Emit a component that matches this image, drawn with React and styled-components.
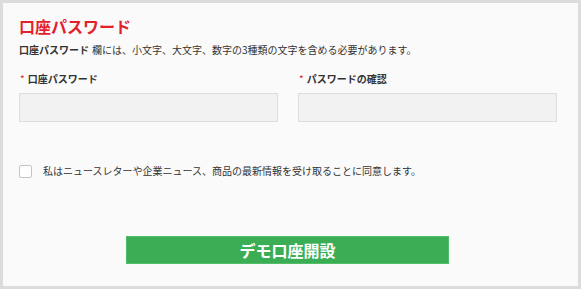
import React from "react";
import styled, { createGlobalStyle } from "styled-components";

const GlobalStyle = createGlobalStyle`
  * {
    box-sizing: border-box;
  }
  body {
    margin: 0;
    background: #dcdcdc;
    font-family: "Noto Sans CJK JP", "Noto Sans", sans-serif;
    color: #333;
  }
`;

const Frame = styled.div`
  width: 581px;
  height: 289px;
  padding: 3px;
  background: #dcdcdc;
`;

const Card = styled.div`
  height: 100%;
  background: #fafafa;
  padding: 12px 16px 0;
  display: flex;
  flex-direction: column;
`;

const Title = styled.h1`
  margin: 0;
  font-size: 16px;
  line-height: 22px;
  font-weight: 700;
  color: #e3202c;
`;

const Note = styled.p`
  margin: 6px 0 0;
  font-size: 10px;
  line-height: 14px;
  strong {
    font-weight: 700;
    margin-right: 3px;
  }
`;

const Fields = styled.div`
  display: grid;
  grid-template-columns: 259px 259px;
  column-gap: 20px;
  margin-top: 15px;
`;

const Field = styled.div`
  display: flex;
  flex-direction: column;
`;

const Label = styled.label`
  font-size: 10px;
  line-height: 14px;
  font-weight: 700;
  padding-left: 1px;
  span {
    color: #e3202c;
    margin-right: 3px;
    font-weight: 400;
  }
`;

const Input = styled.input`
  margin-top: 7px;
  height: 29px;
  background: #f2f2f2;
  border: 1px solid #dddddd;
  border-radius: 0;
  outline: none;
  padding: 0 8px;
`;

const Agree = styled.label`
  display: flex;
  align-items: center;
  gap: 11px;
  margin-top: 42px;
  font-size: 10px;
  line-height: 14px;
`;

const Box = styled.span`
  width: 13px;
  height: 13px;
  border: 1px solid #c4c4c4;
  border-radius: 2px;
  background: #fff;
  flex-shrink: 0;
`;

const Submit = styled.button`
  margin: 58px 0 0 107px;
  width: 323px;
  height: 28px;
  border: 1px solid #52bd69;
  background: #3bad54;
  color: #fff;
  font-family: "Noto Sans CJK JP", "Noto Sans", sans-serif;
  font-size: 16px;
  font-weight: 700;
  padding: 0;
  cursor: pointer;
`;

const App = () => {
  return (
    <>
      <GlobalStyle />
      <Frame>
        <Card>
          <Title>口座パスワード</Title>
          <Note>
            <strong>口座パスワード</strong>欄には、小文字、大文字、数字の3種類の文字を含める必要があります。
          </Note>
          <Fields>
            <Field>
              <Label>
                <span>*</span>口座パスワード
              </Label>
              <Input type="password" />
            </Field>
            <Field>
              <Label>
                <span>*</span>パスワードの確認
              </Label>
              <Input type="password" />
            </Field>
          </Fields>
          <Agree>
            <Box />
            私はニュースレターや企業ニュース、商品の最新情報を受け取ることに同意します。
          </Agree>
          <Submit>デモ口座開設</Submit>
        </Card>
      </Frame>
    </>
  );
};

export default App;
